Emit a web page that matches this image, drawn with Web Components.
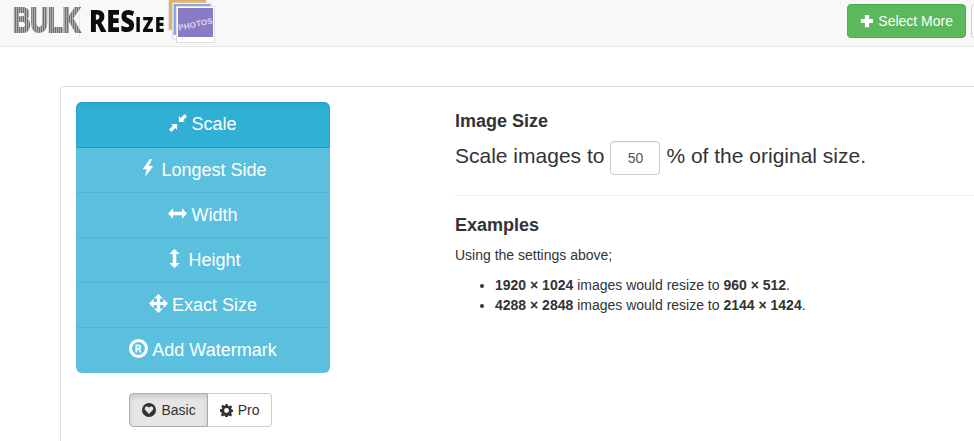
<!DOCTYPE html>
<html>
<head>
<meta charset="utf-8">
<title>Bulk Resize Photos</title>
<style>
  html, body { margin: 0; height: 441px; overflow: hidden; background: #fff; }
  body { font-family: "Liberation Sans", Arial, sans-serif; color: #333; font-size: 14px; }
</style>
</head>
<body>
<app-header></app-header>
<settings-card>
  <mode-menu slot="side"></mode-menu>
  <plan-toggle slot="side"></plan-toggle>
  <size-panel slot="main"></size-panel>
</settings-card>

<script>
// small icon set, all drawn on a 16x16 box
const ICONS = {
  scale: '<path d="M8.800 7.200V1.800L10.500 3.500 13.800 0 16 2.200 12.500 5.500 14.200 7.200ZM7.200 8.800V14.200L5.500 12.500 2.200 16 0 13.800 3.500 10.500 1.800 8.800Z"/>',
  bolt: '<path d="M9.800 0 3.200 9.200H7L5.200 16 12.800 6.200H8.800L11.600 0Z"/>',
  width: '<path d="M0 8 4.200 3.600V6.500H11.800V3.600L16 8 11.800 12.400V9.500H4.200V12.400Z"/>',
  height: '<path d="M8 0 12.400 4.200H9.500V11.800H12.400L8 16 3.600 11.800H6.500V4.200H3.600Z"/>',
  move: '<path d="M8 0 11.800 3.800H9.300V6.700H12.200V4.200L16 8 12.200 11.800V9.300H9.300V12.200H11.800L8 16 4.200 12.200H6.700V9.300H3.800V11.800L0 8 3.800 4.200V6.700H6.700V3.800H4.200Z"/>',
  registered: '<path fill-rule="evenodd" d="M8 0a8 8 0 1 0 0 16A8 8 0 0 0 8 0Zm0 2.600a5.400 5.400 0 1 1 0 10.800A5.400 5.400 0 0 1 8 2.600ZM5.400 4.600v6.800h1.600V9h.9l1.300 2.400h1.800L9 8.700c.8-.3 1.300-1 1.300-2 0-1.400-.9-2.100-2.500-2.100ZM7 5.800h.6c.7 0 1 .3 1 .9s-.3 1-1 1H7Z"/>',
  plus: '<path d="M5.600 1h4.800v4.600H15v4.800h-4.600V15H5.600v-4.600H1V5.600h4.600Z"/>',
  heart: '<path fill-rule="evenodd" d="M8 0a8 8 0 1 0 0 16A8 8 0 0 0 8 0ZM8 12.600 3.900 8.300C2.200 6.400 3.500 4 5.500 4 6.600 4 7.500 4.600 8 5.500 8.500 4.600 9.400 4 10.500 4c2 0 3.300 2.400 1.600 4.300Z"/>',
  cog: '<path fill-rule="evenodd" d="M6.600 0h2.800l.4 2.200 1.300.6 1.900-1.300 2 2-1.300 1.900.6 1.300 2.200.4v2.800l-2.200.4-.6 1.300 1.300 1.900-2 2-1.900-1.300-1.300.6-.4 2.200H6.600l-.4-2.200-1.300-.6-1.900 1.300-2-2 1.300-1.900-.6-1.300L0 9.400V6.600l2.200-.4.6-1.300-1.300-1.900 2-2 1.900 1.300 1.300-.6ZM8 5a3 3 0 1 0 0 6 3 3 0 0 0 0-6Z"/>'
};

function icon(name, size) {
  return `<svg viewBox="0 0 16 16" width="${size}" height="${size}" fill="currentColor" aria-hidden="true">${ICONS[name]}</svg>`;
}

class AppLogo extends HTMLElement {
  constructor() {
    super();
    this.attachShadow({ mode: 'open' }).innerHTML = `
      <style>
        :host { display: flex; align-items: flex-start; height: 46px; overflow: hidden; }
        .words { display: flex; align-items: baseline; width: 152px; margin: 2px 0 0 13px; line-height: 36px; white-space: nowrap; }
        .bulk {
          position: relative; display: inline-block; width: 98px; margin-right: -21px;
          transform: scaleX(.69); transform-origin: 0 50%; background: #f8f8f8;
          font: 700 35px/36px "Liberation Sans", Arial, sans-serif; color: #707070;
          -webkit-text-stroke: 2.200px #707070;
        }
        /* light stripes only show on the dark letters */
        .bulk::after {
          content: ""; position: absolute; inset: 0; mix-blend-mode: lighten;
          background: repeating-linear-gradient(90deg, #000 0 1.45px, #adadad 1.45px 2.9px);
        }
        .resize {
          display: inline-block; transform: scaleX(.85); transform-origin: 0 50%;
          font: 800 30px/36px "Open Sans", sans-serif; color: #0c0c0c;
        }
        .resize small { font-size: 21px; letter-spacing: 1.500px; }
        svg { display: block; flex: none; }
      </style>
      <div class="words">
        <span class="bulk">BULK</span>
        <span class="resize">RES<small>IZE</small></span>
      </div>
      <svg width="52" height="46" viewBox="0 0 52 46">
        <rect x="3.500" y="-3" width="38" height="33" fill="#e3ad63" stroke="#e4e4e4"/>
        <rect x="7.500" y="3" width="39" height="36" fill="#fff" stroke="#ddd"/>
        <rect x="8.500" y="4" width="37" height="31" fill="#86a9df"/>
        <rect x="11.500" y="6.500" width="38" height="36" fill="#fff" stroke="#ddd"/>
        <rect x="13" y="8" width="35" height="29" fill="#8b7bc6"/>
        <text x="30.500" y="27" transform="rotate(-12 30.500 24)" text-anchor="middle" font-family="Liberation Sans" font-weight="700" font-size="8" letter-spacing=".2" fill="#dcd6f2">PHOTOS</text>
      </svg>
    `;
  }
}
customElements.define('app-logo', AppLogo);

class AppHeader extends HTMLElement {
  constructor() {
    super();
    this.attachShadow({ mode: 'open' }).innerHTML = `
      <style>
        :host {
          display: flex; justify-content: space-between; align-items: flex-start;
          height: 46px; background: #f8f8f8; border-bottom: 1px solid #e7e7e7; overflow: hidden;
        }
        .actions { display: flex; gap: 5px; margin-top: 4px; margin-right: -30px; }
        button {
          display: flex; align-items: center; gap: 4px; height: 34px; padding: 0 12px; box-sizing: border-box;
          font: 14px "Liberation Sans", Arial, sans-serif; border: 1px solid #4cae4c; border-radius: 4px;
          background: #5cb85c; color: #fff;
        }
        button.other { width: 33px; background: #fff; border-color: #ccc; }
      </style>
      <app-logo></app-logo>
      <div class="actions">
        <button>${icon('plus', 14)}Select More</button>
        <button class="other"></button>
      </div>
    `;
  }
}
customElements.define('app-header', AppHeader);

class SettingsCard extends HTMLElement {
  constructor() {
    super();
    this.attachShadow({ mode: 'open' }).innerHTML = `
      <style>
        /* the card carries on past the window, so the host crops it */
        :host { display: block; margin: 39px 0 0 60px; width: 914px; height: 355px; overflow: hidden; }
        .card {
          display: grid; grid-template-columns: 254px 1fr; column-gap: 125px; width: 1000px;
          padding: 15px; border: 1px solid #ddd; border-radius: 4px; background: #fff; height: 400px; box-sizing: border-box;
        }
        .side { display: flex; flex-direction: column; align-items: center; gap: 20px; }
      </style>
      <div class="card">
        <div class="side"><slot name="side"></slot></div>
        <div><slot name="main"></slot></div>
      </div>
    `;
  }
}
customElements.define('settings-card', SettingsCard);

class ModeMenu extends HTMLElement {
  constructor() {
    super();
    const items = [
      ['scale', 'Scale', 18],
      ['bolt', 'Longest Side', 18],
      ['width', 'Width', 19],
      ['height', 'Height', 19],
      ['move', 'Exact Size', 19],
      ['registered', 'Add Watermark', 19]
    ];
    this.attachShadow({ mode: 'open' }).innerHTML = `
      <style>
        :host { display: block; width: 254px; }
        .menu { border-radius: 6px; overflow: hidden; background: #5bc0de; }
        a {
          display: flex; align-items: center; justify-content: center; gap: 4px; height: 45px; box-sizing: border-box;
          color: #fff; font-size: 18px; border-top: 1px solid #4fb5d6;
        }
        a:first-child { border-top: 0; }
        a:last-child { height: 46px; padding-bottom: 1px; }
        a.active { height: 46px; background: #31b0d5; box-shadow: inset 0 2px 3px rgba(0,0,0,.1); border-bottom: 1px solid #269abc; }
        a.active + a { height: 44px; border-top: 0; }
        svg { display: block; position: relative; top: -2px; }
      </style>
      <nav class="menu">
        ${items.map(([name, label, size], i) =>
          `<a class="${i === 0 ? 'active' : ''}">${icon(name, size)}<span>${label}</span></a>`).join('')}
      </nav>
    `;
  }
}
customElements.define('mode-menu', ModeMenu);

class PlanToggle extends HTMLElement {
  constructor() {
    super();
    this.attachShadow({ mode: 'open' }).innerHTML = `
      <style>
        :host { display: inline-flex; margin-right: 5px; }
        button {
          display: flex; align-items: center; gap: 5px; height: 34px; box-sizing: border-box; padding: 0 11px 0 12px;
          font: 14px "Liberation Sans", Arial, sans-serif; color: #333; background: #fff; border: 1px solid #ccc;
        }
        .on { background: #e6e6e6; border-color: #adadad; border-radius: 4px 0 0 4px; box-shadow: inset 0 3px 5px rgba(0,0,0,.125); }
        .off { border-left: 0; border-radius: 0 4px 4px 0; }
      </style>
      <button class="on">${icon('heart', 14)}Basic</button>
      <button class="off">${icon('cog', 13)}Pro</button>
    `;
  }
}
customElements.define('plan-toggle', PlanToggle);

class SizePanel extends HTMLElement {
  constructor() {
    super();
    this.attachShadow({ mode: 'open' }).innerHTML = `
      <style>
        :host { display: block; }
        h4 { margin: 0; font-size: 18px; line-height: 20px; font-weight: 700; color: #333; }
        h4.first { margin-top: 9px; }
        .line { display: flex; align-items: flex-start; gap: 6px; margin-top: 10px; font-size: 21px; line-height: 30px; }
        .field {
          width: 50px; height: 34px; box-sizing: border-box; border: 1px solid #ccc; border-radius: 4px;
          font: 14px "Liberation Sans", Arial, sans-serif; color: #555; text-align: center; padding: 0;
          box-shadow: inset 0 1px 1px rgba(0,0,0,.075);
        }
        hr { border: 0; border-top: 1px solid #eee; margin: 20px 0 19px; }
        p { margin: 10px 0; font-size: 14px; line-height: 20px; }
        ul { margin: 0; padding-left: 40px; font-size: 14px; line-height: 20px; }
      </style>
      <h4 class="first">Image Size</h4>
      <div class="line"><span>Scale images to</span><input class="field" value="50"><span>% of the original size.</span></div>
      <hr>
      <h4>Examples</h4>
      <p>Using the settings above;</p>
      <ul>
        <li><b>1920 × 1024</b> images would resize to <b>960 × 512</b>.</li>
        <li><b>4288 × 2848</b> images would resize to <b>2144 × 1424</b>.</li>
      </ul>
    `;
  }
}
customElements.define('size-panel', SizePanel);
</script>
</body>
</html>
